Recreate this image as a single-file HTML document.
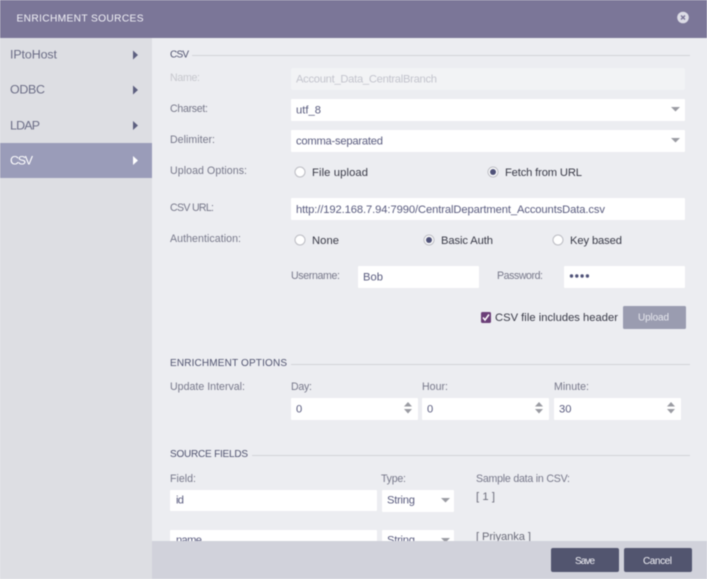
<!DOCTYPE html>
<html><head><meta charset="utf-8"><title>Enrichment Sources</title>
<style>
html,body{margin:0;padding:0;width:707px;height:579px;overflow:hidden;background:#ecedf1}
svg{display:block;filter:blur(.45px)}
text{font-family:"Liberation Sans",sans-serif;font-size:10.6px;fill:#77788a}
.h{font-size:10px;fill:#50536f}
.v{font-size:11.2px;fill:#595b7e}
.r{font-size:11.2px;fill:#383946}
.n{font-size:12.4px;fill:#6a6c85}
.sel{fill:#9a9ba2}
</style></head><body>
<svg width="707" height="579" viewBox="0 0 707 579" xmlns="http://www.w3.org/2000/svg">
<rect width="707" height="579" fill="#ecedf1"/>
<rect y="38" width="152" height="541" fill="#dddee3"/>
<rect y="143" width="152" height="35" fill="#9a9cb9"/>
<rect width="707" height="38" fill="#7b7698"/>
<text x="16.5" y="21.5" style="font-size:10.2px;fill:#f2f2f7" textLength="127">ENRICHMENT SOURCES</text>
<circle cx="683" cy="17.5" r="5.8" fill="#dcdce6"/>
<path d="M681 15.500l4 4M685 15.500l-4 4" stroke="#7b7698" stroke-width="1.400"/>

<text class="n" x="10" y="58.500" textLength="47">IPtoHost</text>
<text class="n" x="10" y="93.500" textLength="35">ODBC</text>
<text class="n" x="10" y="129.500" textLength="30">LDAP</text>
<text class="n" x="10" y="164.500" textLength="23" style="fill:#fff">CSV</text>
<path d="M133 50.500l5 4.500-5 4.500zM133 85.500l5 4.500-5 4.500zM133 121l5 4.500-5 4.500z" fill="#5d6080"/>
<path d="M133 156l5 4.500-5 4.500z" fill="#fff"/>

<text class="h" x="170" y="57.500" textLength="19">CSV</text>
<rect x="192" y="55" width="498" height="1" fill="#d2d3d8"/>
<text x="170" y="81" textLength="30" style="fill:#c6c7cd">Name:</text>
<rect x="291" y="68" width="394" height="22" rx="2" fill="#f2f3f5"/>
<text class="v" x="296" y="82.500" textLength="141" style="fill:#c3c4cd">Account_Data_CentralBranch</text>

<text x="170" y="112" textLength="38">Charset:</text>
<rect x="291" y="99" width="394" height="22" rx="1" fill="#fff"/>
<text class="v" x="296" y="113.500" textLength="25">utf_8</text>
<path d="M671 107h9l-4.500 4.500z" class="sel"/>

<text x="170" y="143" textLength="45">Delimiter:</text>
<rect x="291" y="130" width="394" height="22" rx="1" fill="#fff"/>
<text class="v" x="296" y="144.500" textLength="87">comma-separated</text>
<path d="M671 138h9l-4.500 4.500z" class="sel"/>

<text x="170" y="174" textLength="77">Upload Options:</text>
<circle cx="300" cy="172" r="5" fill="#fff" stroke="#bcbdc3"/>
<text class="r" x="312" y="176" textLength="56">File upload</text>
<circle cx="493" cy="172" r="5" fill="#fff" stroke="#bcbdc3"/>
<circle cx="493" cy="172" r="3" fill="#4f5278"/>
<text class="r" x="505" y="176" textLength="77">Fetch from URL</text>

<text x="170" y="211" textLength="44">CSV URL:</text>
<rect x="291" y="198" width="394" height="22" rx="1" fill="#fff"/>
<text class="v" x="296" y="213" textLength="309">http://192.168.7.94:7990/CentralDepartment_AccountsData.csv</text>

<text x="170" y="242" textLength="71">Authentication:</text>
<circle cx="300" cy="240" r="5" fill="#fff" stroke="#bcbdc3"/>
<text class="r" x="312" y="244" textLength="27">None</text>
<circle cx="429" cy="240" r="5" fill="#fff" stroke="#bcbdc3"/>
<circle cx="429" cy="240" r="3" fill="#4f5278"/>
<text class="r" x="441" y="244" textLength="52">Basic Auth</text>
<circle cx="558" cy="240" r="5" fill="#fff" stroke="#bcbdc3"/>
<text class="r" x="570" y="244" textLength="52">Key based</text>

<text x="291" y="279" textLength="49">Username:</text>
<rect x="358" y="266" width="121" height="22" rx="1" fill="#fff"/>
<text class="v" x="363" y="280.500" textLength="20">Bob</text>
<text x="497" y="279" textLength="46">Password:</text>
<rect x="564" y="266" width="121" height="22" rx="1" fill="#fff"/>
<circle cx="571.500" cy="276" r="1.700" fill="#4f5278"/><circle cx="576.800" cy="276" r="1.700" fill="#4f5278"/><circle cx="582.100" cy="276" r="1.700" fill="#4f5278"/><circle cx="587.400" cy="276" r="1.700" fill="#4f5278"/>

<rect x="481" y="312" width="10" height="11" rx="1.500" fill="#6b3f78"/>
<path d="M483 317.500l2 2.500 4-5.500" fill="none" stroke="#fff" stroke-width="1.500"/>
<text class="r" x="495" y="321" textLength="123">CSV file includes header</text>
<rect x="623" y="306" width="63" height="23" rx="1.500" fill="#9a9cb0"/>
<text x="638" y="320.500" textLength="31" style="font-size:10px;fill:#e6e7ee">Upload</text>

<text class="h" x="170" y="366" textLength="117">ENRICHMENT OPTIONS</text>
<rect x="291" y="364" width="399" height="1" fill="#d2d3d8"/>
<text x="170" y="390" textLength="75">Update Interval:</text>
<text x="291" y="390" textLength="21">Day:</text>
<text x="422" y="390" textLength="26">Hour:</text>
<text x="554" y="390" textLength="35">Minute:</text>
<rect x="291" y="398" width="127" height="22" rx="1" fill="#fff"/>
<rect x="422" y="398" width="127" height="22" rx="1" fill="#fff"/>
<rect x="554" y="398" width="127" height="22" rx="1" fill="#fff"/>
<text class="v" x="296" y="412.500">0</text>
<text class="v" x="427" y="412.500">0</text>
<text class="v" x="559" y="412.500" textLength="12.500">30</text>
<path d="M404 406.500l4-4.500 4 4.500zM404 409l4 4.500 4-4.500zM535 406.500l4-4.500 4 4.500zM535 409l4 4.500 4-4.500zM667 406.500l4-4.500 4 4.500zM667 409l4 4.500 4-4.500z" class="sel"/>

<text class="h" x="170" y="457" textLength="78">SOURCE FIELDS</text>
<rect x="252" y="455" width="438" height="1" fill="#d2d3d8"/>
<text x="170" y="482" textLength="26">Field:</text>
<text x="381" y="482" textLength="25">Type:</text>
<text x="476" y="482" textLength="94">Sample data in CSV:</text>
<rect x="170" y="490" width="207" height="21" rx="1" fill="#fff"/>
<text class="v" x="176" y="503.500" textLength="8">id</text>
<rect x="382" y="490" width="72" height="22" rx="1" fill="#fff"/>
<text class="v" x="387" y="503.500" textLength="28">String</text>
<path d="M441 498h9l-4.500 4.500z" class="sel"/>
<text x="476" y="500" textLength="19" style="font-size:11.200px;fill:#6b6c7a">[ 1 ]</text>
<rect x="170" y="530" width="207" height="21" rx="1" fill="#fff"/>
<text class="v" x="176" y="543.500" textLength="26">name</text>
<rect x="382" y="530" width="72" height="21" rx="1" fill="#fff"/>
<text class="v" x="387" y="543.500" textLength="28">String</text>
<path d="M441 538h9l-4.500 4.500z" class="sel"/>
<text x="476" y="540" textLength="55" style="font-size:11.200px;fill:#6b6c7a">[ Priyanka ]</text>

<rect x="152" y="541" width="555" height="38" fill="#d1d2db"/>
<rect x="551" y="548" width="68" height="24" rx="2" fill="#52556f"/>
<text x="575" y="564" textLength="20" style="font-size:10px;fill:#f0f0f5">Save</text>
<rect x="624" y="548" width="68" height="24" rx="2" fill="#52556f"/>
<text x="643" y="564" textLength="29" style="font-size:10px;fill:#f0f0f5">Cancel</text>
</svg>
</body></html>
